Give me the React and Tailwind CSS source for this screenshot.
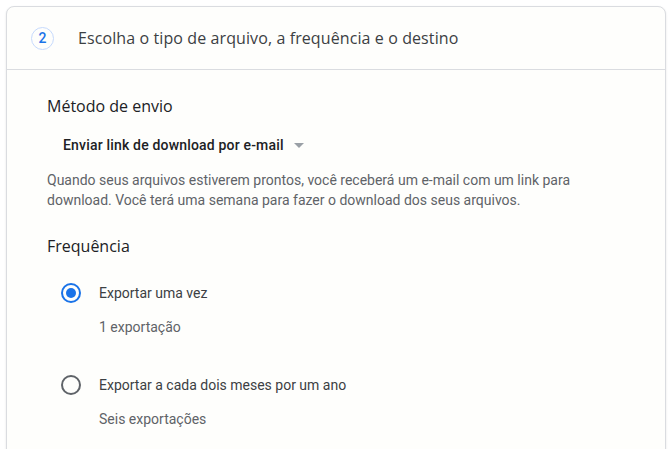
import { useState } from 'react';

const ff = { fontFamily: 'Roboto, "Liberation Sans", sans-serif' };

const Radio = ({ checked }) => (
  <span
    className={`flex h-[20px] w-[20px] shrink-0 items-center justify-center rounded-full border-2 ${
      checked ? 'border-[#1a73e8]' : 'border-[#5f6368]'
    }`}
  >
    {checked && <span className="h-[10px] w-[10px] rounded-full bg-[#1a73e8]" />}
  </span>
);

export default function App() {
  const [freq, setFreq] = useState('once');

  const options = [
    { id: 'once', label: 'Exportar uma vez', sub: '1 exportação' },
    { id: 'bimonthly', label: 'Exportar a cada dois meses por um ano', sub: 'Seis exportações' },
  ];

  return (
    <div className="h-[449px] overflow-hidden bg-white pt-[6px] px-[6px]" style={ff}>
      <div className="min-h-[460px] rounded-t-[8px] border border-[#dadce0] bg-[#fefefc] shadow-[0_1px_2px_rgba(60,64,67,0.15)]">
        {/* header */}
        <div className="flex h-[63px] items-center gap-[24px] border-b border-[#dadce0] pl-[24px]">
          <span className="flex h-[23px] w-[23px] items-center justify-center rounded-full border border-[#c6dafc] text-[14px] font-medium text-[#1a73e8]">
            2
          </span>
          <h2 className="text-[16px] tracking-[0.1px] text-[#3c4043]" style={{ fontFamily: '"Open Sans", Roboto, sans-serif' }}>
            Escolha o tipo de arquivo, a frequência e o destino
          </h2>
        </div>

        {/* body */}
        <div className="pl-[40px] pr-[24px] pt-[25px]">
          <h3 className="text-[16px] leading-[22px] text-[#202124]" style={{ fontFamily: '"Open Sans", Roboto, sans-serif' }}>
            Método de envio
          </h3>

          <button className="mt-[18px] flex items-center gap-[10px] pl-[16px] text-[14px] font-medium tracking-[0.18px] text-[#202124]">
            Enviar link de download por e-mail
            <svg width="10" height="5" viewBox="0 0 10 5">
              <path d="M0 0h10L5 5z" fill="#9aa0a6" />
            </svg>
          </button>

          <p className="mt-[14px] text-[14px] leading-[20px] text-[#5f6368]">
            Quando seus arquivos estiverem prontos, você receberá um e-mail com um link para
            <br />
            download. Você terá uma semana para fazer o download dos seus arquivos.
          </p>

          <h3 className="mt-[25px] text-[16px] leading-[22px] text-[#202124]" style={{ fontFamily: '"Open Sans", Roboto, sans-serif' }}>
            Frequência
          </h3>

          <div className="mt-[26px] flex flex-col gap-[38px] pl-[14px]">
            {options.map((o) => (
              <label key={o.id} className="flex cursor-pointer flex-col" onClick={() => setFreq(o.id)}>
                <div className="flex items-center gap-[18px]">
                  <Radio checked={freq === o.id} />
                  <span className="text-[14px] leading-[20px] text-[#3c4043]">{o.label}</span>
                </div>
                <span className="mt-[14px] pl-[38px] text-[14px] leading-[20px] text-[#5f6368]">{o.sub}</span>
              </label>
            ))}
          </div>
        </div>
      </div>
    </div>
  );
}
